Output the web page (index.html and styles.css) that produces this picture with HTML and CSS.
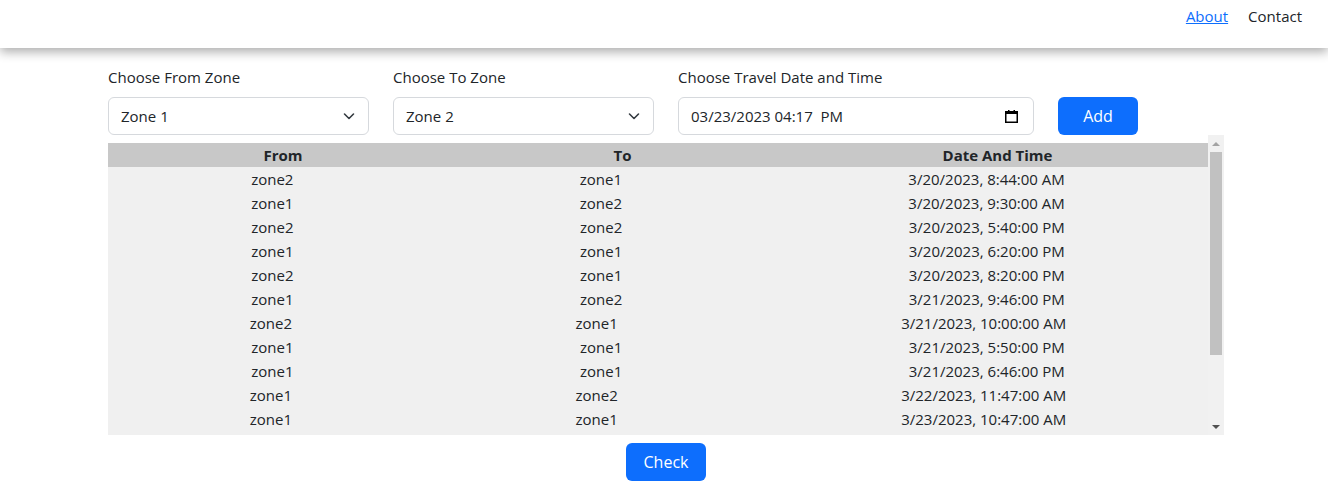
FILE: index.html
```html
<!DOCTYPE html>
<html lang="en">
<head>
<meta charset="utf-8">
<title>Zones</title>
<link rel="stylesheet" href="styles.css">
</head>
<body>
<nav class="navbar">
  <a class="nav-link active" href="#">About</a>
  <a class="nav-link" href="#">Contact</a>
</nav>
<main class="main">
  <div class="form-row">
    <div class="field field-sm">
      <label class="label">Choose From Zone</label>
      <div class="select">
        <span>Zone 1</span>
        <svg class="chevron" viewBox="0 0 16 16" width="16" height="16"><path d="M3.5 6l4.5 4.5 4.5-4.5" fill="none" stroke="#343a40" stroke-width="1.6" stroke-linecap="round" stroke-linejoin="round"/></svg>
      </div>
    </div>
    <div class="field field-sm">
      <label class="label">Choose To Zone</label>
      <div class="select">
        <span>Zone 2</span>
        <svg class="chevron" viewBox="0 0 16 16" width="16" height="16"><path d="M3.5 6l4.5 4.5 4.5-4.5" fill="none" stroke="#343a40" stroke-width="1.6" stroke-linecap="round" stroke-linejoin="round"/></svg>
      </div>
    </div>
    <div class="field field-lg">
      <label class="label">Choose Travel Date and Time</label>
      <div class="select date">
        <span>03/23/2023 04:17&nbsp; PM</span>
        <svg class="cal" viewBox="0 0 13 13" width="13" height="13"><rect x="0.75" y="1.75" width="11.5" height="10.5" fill="none" stroke="#000" stroke-width="1.5"/><rect x="0" y="1" width="13" height="3" fill="#000"/><rect x="3" y="0" width="1.5" height="2" fill="#000"/><rect x="8.5" y="0" width="1.5" height="2" fill="#000"/></svg>
      </div>
    </div>
    <button class="btn">Add</button>
  </div>

  <div class="table-wrap">
    <div class="table-view">
      <div class="trow thead"><span>From</span><span>To</span><span>Date And Time</span></div>
      <div class="trow"><span>zone2</span><span>zone1</span><span>3/20/2023, 8:44:00 AM</span></div>
      <div class="trow"><span>zone1</span><span>zone2</span><span>3/20/2023, 9:30:00 AM</span></div>
      <div class="trow"><span>zone2</span><span>zone2</span><span>3/20/2023, 5:40:00 PM</span></div>
      <div class="trow"><span>zone1</span><span>zone1</span><span>3/20/2023, 6:20:00 PM</span></div>
      <div class="trow"><span>zone2</span><span>zone1</span><span>3/20/2023, 8:20:00 PM</span></div>
      <div class="trow"><span>zone1</span><span>zone2</span><span>3/21/2023, 9:46:00 PM</span></div>
      <div class="trow"><span>zone2</span><span>zone1</span><span>3/21/2023, 10:00:00 AM</span></div>
      <div class="trow"><span>zone1</span><span>zone1</span><span>3/21/2023, 5:50:00 PM</span></div>
      <div class="trow"><span>zone1</span><span>zone1</span><span>3/21/2023, 6:46:00 PM</span></div>
      <div class="trow"><span>zone1</span><span>zone2</span><span>3/22/2023, 11:47:00 AM</span></div>
      <div class="trow"><span>zone1</span><span>zone1</span><span>3/23/2023, 10:47:00 AM</span></div>
      <div class="trow-rest"></div>
    </div>
    <div class="scrollbar">
      <div class="sb-btn"><span class="tri-up"></span></div>
      <div class="sb-track"><div class="sb-thumb"></div></div>
      <div class="sb-btn"><span class="tri-down"></span></div>
    </div>
  </div>

  <div class="actions">
    <button class="btn">Check</button>
  </div>
</main>
</body>
</html>
```
FILE: styles.css
```css
* { box-sizing: border-box; }
html, body {
  margin: 0;
  padding: 0;
  background: #fff;
}
body {
  font-family: "Open Sans", "Noto Sans", sans-serif;
  font-size: 15px;
  line-height: 24px;
  color: #212529;
}
.navbar {
  height: 48px;
  display: flex;
  justify-content: flex-end;
  align-items: flex-start;
  padding: 4px 26px 0 0;
  gap: 20px;
  box-shadow: 0 4px 10px rgba(0, 0, 0, 0.32);
  position: relative;
  z-index: 2;
}
.nav-link {
  color: #212529;
  text-decoration: none;
}
.nav-link.active {
  color: #0d6efd;
  text-decoration: underline;
}
.main {
  width: 1116px;
  margin-left: 108px;
  padding-top: 17px;
}
.form-row {
  display: flex;
  align-items: flex-end;
  gap: 24px;
}
.field {
  display: flex;
  flex-direction: column;
}
.field-sm { width: 261px; }
.field-lg { width: 356px; }
.label {
  margin-bottom: 8px;
  display: block;
}
.select {
  height: 38px;
  border: 1px solid #d6d9dd;
  border-radius: 6px;
  padding: 0 12px;
  display: flex;
  align-items: center;
  justify-content: space-between;
  background: #fff;
}
.select.date { padding: 0 15px 0 12px; }
.chevron { margin-right: -1px; }
.btn {
  width: 80px;
  height: 38px;
  border: none;
  border-radius: 6px;
  background: #0d6efd;
  color: #fff;
  font-family: inherit;
  font-size: 16px;
  padding: 0;
}
.table-wrap {
  display: flex;
  height: 300px;
}
.table-view {
  width: 1100px;
  overflow: hidden;
  padding-top: 8px;
  display: flex;
  flex-direction: column;
}
.trow {
  display: flex;
  justify-content: space-around;
  height: 24px;
  flex: none;
  line-height: 24px;
  background: #f0f0f0;
  white-space: nowrap;
}
.trow.thead {
  background: #c8c8c8;
  font-weight: 700;
}
.trow-rest {
  flex: 1;
  background: #f0f0f0;
}
.scrollbar {
  width: 16px;
  background: #f1f1f1;
  display: flex;
  flex-direction: column;
}
.sb-btn {
  height: 17px;
  display: flex;
  align-items: center;
  justify-content: center;
}
.sb-track {
  flex: 1;
  padding: 0 2px;
}
.sb-thumb {
  height: 203px;
  background: #c1c1c1;
}
.tri-up, .tri-down {
  width: 0;
  height: 0;
  border-left: 4px solid transparent;
  border-right: 4px solid transparent;
}
.tri-up { border-bottom: 4px solid #a3a3a3; }
.tri-down { border-top: 4px solid #505050; }
.actions {
  display: flex;
  justify-content: center;
  padding-top: 8px;
}
```
